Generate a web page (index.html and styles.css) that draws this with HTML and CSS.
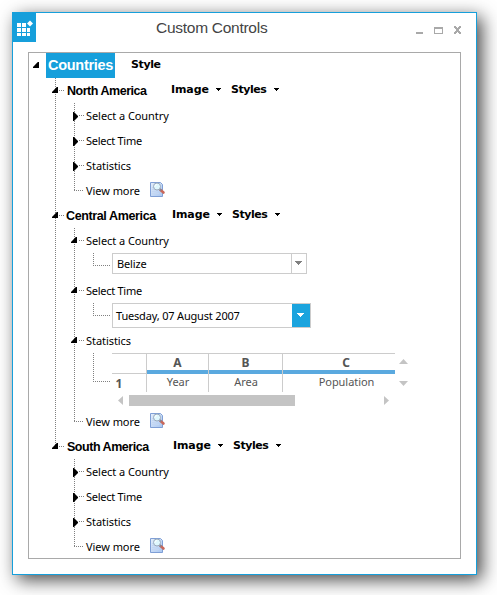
FILE: index.html
```html
<!DOCTYPE html>
<html lang="en">
<head>
<meta charset="utf-8">
<title>Custom Controls</title>
<link rel="stylesheet" href="styles.css">
</head>
<body>
<svg class="defs" width="0" height="0">
  <defs>
    <linearGradient id="paper" x1="0" y1="0" x2="1" y2="1"><stop offset="0" stop-color="#e4eefb"/><stop offset="1" stop-color="#a9c6f0"/></linearGradient>
    <symbol id="preview" viewBox="0 0 16 16">
      <path d="M.5 .5H10.5L12.5 2.5V14.500H.5Z" fill="url(#paper)" stroke="#7f9fd6"/>
      <path d="M2 5.500H4M2 7.500H4M2 9.500H6M2 11.500H9" stroke="#c3d6f2"/>
      <path d="M10.500 8L13.500 10.500" stroke="#c9685a" stroke-width="2.600" stroke-linecap="round"/>
      <path d="M9.500 7L11 8.500" stroke="#7f8799" stroke-width="2"/>
      <circle cx="7" cy="4.500" r="3.500" fill="#dff7fd" stroke="#9aa9bb"/>
      <path d="M5 4.500Q5 2.500 7 2.500" fill="none" stroke="#fff"/>
    </symbol>
    <symbol id="down" viewBox="0 0 5 3"><path d="M0 0H5V1H4V2H3V3H2V2H1V1H0Z"/></symbol>
  </defs>
</svg>
<main class="window">
  <header class="titlebar">
    <svg class="app" width="23" height="29" viewBox="0 0 23 29" fill="#fff" shape-rendering="crispEdges">
      <path d="M4 10h4v4H4zM9 10h4v4H9zM4 15h4v4H4zM9 15h4v4H9zM14 15h3v4h-3zM4 20h4v3H4zM9 20h4v3H9zM14 20h3v3h-3z"/>
      <path d="M17 7.500L20 10.500L17 13.500L14 10.500Z" shape-rendering="auto"/>
    </svg>
    <h1><span>Custom Controls</span></h1>
    <svg class="buttons" width="46" height="9" viewBox="0 0 46 9" fill="#a9a9a9" shape-rendering="crispEdges">
      <path d="M0 6h7v2H0z"/>
      <path fill-rule="evenodd" d="M18 1h9v7h-9zM19 3v4h7V3z"/>
      <path d="M38 0h2v1h1v1h1v-1h1v-1h2v2h-1v1h-1v2h1v1h1v2h-2v-1h-1v-1h-1v1h-1v1h-2v-2h1v-1h1v-2h-1v-1h-1z"/>
    </svg>
  </header>
  <section class="tree">
    <div class="root"><i class="open"></i><b class="selected"><span>Countries</span></b><b class="tool style">Style</b></div>
    <ul class="regions">
      <li class="north">
        <div class="row region"><i class="open"></i><b class="name">North America</b><b class="tool">Image</b><svg class="caret"><use href="#down"/></svg><b class="tool styles">Styles</b><svg class="caret"><use href="#down"/></svg></div>
        <ul class="items">
          <li class="row"><i class="shut"></i><span class="country">Select a Country</span></li>
          <li class="row"><i class="shut"></i><span class="time">Select Time</span></li>
          <li class="row"><i class="shut"></i><span class="stats">Statistics</span></li>
          <li class="row leaf"><i></i><span class="more">View more</span><svg class="preview"><use href="#preview"/></svg></li>
        </ul>
      </li>
      <li class="central">
        <div class="row region"><i class="open"></i><b class="name">Central America</b><b class="tool">Image</b><svg class="caret"><use href="#down"/></svg><b class="tool styles">Styles</b><svg class="caret"><use href="#down"/></svg></div>
        <ul class="items">
          <li class="row"><i class="open"></i><span class="country">Select a Country</span></li>
          <li class="editor"><div class="elbow"></div>
            <div class="combo"><span class="belize">Belize</span><div class="drop"><svg width="7" height="4" viewBox="0 0 7 4" fill="#808080" shape-rendering="crispEdges"><path d="M0 0h7v1H6v1H5v1H4v1H3V3H2V2H1V1H0z"/></svg></div></div>
          </li>
          <li class="row"><i class="open"></i><span class="time">Select Time</span></li>
          <li class="editor"><div class="elbow"></div>
            <div class="combo date"><span class="day">Tuesday, 07 August 2007</span><div class="drop"><svg width="7" height="4" viewBox="0 0 7 4" fill="#fff" shape-rendering="crispEdges"><path d="M0 0h7v1H6v1H5v1H4v1H3V3H2V2H1V1H0z"/></svg></div></div>
          </li>
          <li class="row"><i class="open"></i><span class="stats">Statistics</span></li>
          <li class="editor gridrow"><div class="elbow tall"></div>
            <div class="sheet">
              <div class="cells">
                <div class="corner"></div><div class="head">A</div><div class="head">B</div><div class="head">C</div>
                <div class="index">1</div><div class="cell">Year</div><div class="cell">Area</div><div class="cell last">Population</div>
              </div>
              <div class="hscroll">
                <svg width="5" height="9" viewBox="0 0 5 9"><path d="M5 0V9L0 4.500Z"/></svg>
                <div class="thumb"></div>
                <svg width="5" height="9" viewBox="0 0 5 9"><path d="M0 0V9L5 4.500Z"/></svg>
              </div>
            </div>
            <div class="vscroll">
              <svg width="9" height="5" viewBox="0 0 9 5"><path d="M0 5H9L4.500 0Z"/></svg>
              <svg width="9" height="5" viewBox="0 0 9 5"><path d="M0 0H9L4.500 5Z"/></svg>
            </div>
          </li>
          <li class="row leaf"><i></i><span class="more">View more</span><svg class="preview"><use href="#preview"/></svg></li>
        </ul>
      </li>
      <li class="south">
        <div class="row region"><i class="open"></i><b class="name">South America</b><b class="tool">Image</b><svg class="caret"><use href="#down"/></svg><b class="tool styles">Styles</b><svg class="caret"><use href="#down"/></svg></div>
        <ul class="items">
          <li class="row"><i class="shut"></i><span class="country">Select a Country</span></li>
          <li class="row"><i class="shut"></i><span class="time">Select Time</span></li>
          <li class="row"><i class="shut"></i><span class="stats">Statistics</span></li>
          <li class="row leaf"><i></i><span class="more">View more</span><svg class="preview"><use href="#preview"/></svg></li>
        </ul>
      </li>
    </ul>
  </section>
</main>
</body>
</html>
```
FILE: styles.css
```css
* { box-sizing: border-box; }
html, body { height: 100%; }
body {
  margin: 0;
  padding: 12px;
  overflow: hidden;
  background: #fff;
  color: #000;
  font: 11px/16px "Noto Sans", sans-serif;
  --dots: repeating-linear-gradient(to bottom, #808080 0 1px, transparent 1px 2px);
  --dashes: repeating-linear-gradient(to right, #808080 0 1px, transparent 1px 2px);
}
ul { margin: 0; padding: 0; list-style: none; }
svg { display: block; flex: none; }
.defs { position: absolute; }
span, b { white-space: nowrap; }

.window {
  width: 465px;
  height: 563px;
  border: 1px solid #169fdb;
  background: #fff;
  box-shadow: 5px 5px 17px rgba(0, 0, 0, .72);
}
.titlebar { display: flex; height: 39px; }
.app { background: #169fdb; }
h1 {
  flex: 1;
  margin: 0;
  padding: 6px 0 0 120px;
  color: #444;
  font: 15.5px/18px "Liberation Sans", sans-serif;
  letter-spacing: -.27px;
}
.buttons { margin: 13px 14px 0 0; }

.tree {
  width: 433px;
  height: 507px;
  margin-left: 15px;
  border: 1px solid #a9a9a9;
}
.root { display: flex; height: 25px; padding-left: 4px; }
.selected {
  width: 69px;
  height: 25px;
  margin-left: 7px;
  padding: 4px 0 0 2px;
  background: #169fdb;
  color: #fff;
  font: bold 14.5px/17px "Liberation Sans", sans-serif;
  letter-spacing: -.28px;
}
.tool {
  padding-top: 3px;
  font: bold 11px/16px "DejaVu Sans", sans-serif;
  letter-spacing: -.1px;
}
.tool.style { margin-left: 16px; padding-top: 4px; letter-spacing: -.4px; }

.open {
  flex: none;
  width: 6px;
  height: 6px;
  margin-top: 9px;
  background: #000;
  clip-path: polygon(80% 0, 100% 0, 100% 100%, 0 100%, 0 85%);
}
.shut {
  flex: none;
  width: 5px;
  height: 9px;
  margin-top: 9px;
  background: #000;
  clip-path: polygon(0 0, 20% 0, 100% 45%, 100% 55%, 20% 100%, 0 100%);
}

.regions { background: var(--dots) 26px 0 / 1px 369px no-repeat; }
.row { display: flex; height: 25px; }
.region { padding-left: 23px; background: var(--dashes) 30px 12px / 5px 1px no-repeat; }
.name {
  width: 104px;
  margin-left: 9px;
  padding-top: 5px;
  font: bold 12.5px/17px "Liberation Sans", sans-serif;
  letter-spacing: -.47px;
}
.region .tool { width: 45px; padding-top: 4px; }
.region .tool.styles { width: 43px; margin-left: 10px; letter-spacing: -.45px; }
.caret { width: 5px; height: 3px; margin-top: 10px; shape-rendering: crispEdges; }
.central .name { width: 106px; margin-left: 8px; letter-spacing: -.37px; }
.south .name { width: 106px; }

.items { background: var(--dots) 45px 0 / 1px 88px no-repeat; }
.central .items { background-size: 1px 194px; }
.items .row { padding-left: 42px; background: var(--dashes) 50px 12px / 5px 1px no-repeat; }
.items .row.leaf { background-position: 45px 12px; background-size: 10px 1px; }
.items .row span { width: 64px; margin-left: 9px; padding-top: 5px; letter-spacing: -.06px; }
.items .row .time { letter-spacing: -.27px; }
.items .row .shut { margin-left: 2px; }
.items .row .shut + span { margin-left: 8px; }
.items .row.leaf i { width: 6px; }
.preview { width: 16px; height: 16px; margin-top: 4px; }

.editor { display: flex; height: 25px; padding-left: 64px; }
.elbow {
  width: 19px;
  height: 13px;
  background: var(--dots) 0 0 / 1px 13px no-repeat, var(--dashes) 0 12px / 18px 1px no-repeat;
}
.elbow.tall {
  height: 30px;
  background: var(--dots) 0 0 / 1px 29px no-repeat, var(--dashes) 0 28px / 18px 1px no-repeat;
}
.combo {
  display: flex;
  justify-content: space-between;
  width: 195px;
  height: 21px;
  border: 1px solid #ccc;
  padding-left: 4px;
  line-height: 20px;
  letter-spacing: -.15px;
}
.drop {
  display: flex;
  width: 15px;
  padding: 7px 0 0 3px;
  border-left: 1px solid #ccc;
}
.date { width: 199px; height: 25px; padding-left: 3px; line-height: 23px; letter-spacing: -.18px; }
.date .drop { width: 18px; padding: 9px 0 0 5px; border: 0; background: #1ba4de; }

.gridrow { height: 56px; }
.sheet { width: 283px; }
.cells {
  display: grid;
  grid-template-columns: 34px 62px 74px 113px;
  grid-template-rows: 20px 18px;
  border-top: 1px solid #ccc;
  color: #555;
  text-align: center;
}
.head {
  border-left: 1px solid #ccc;
  background: linear-gradient(#5aa9df, #5aa9df) 0 100% / 100% 4px no-repeat;
  font: bold 12px/18px "Noto Sans", sans-serif;
}
.head:last-of-type, .head:nth-child(4) { padding-left: 14px; }
.corner { border-bottom: 1px solid #ccc; }
.index { padding-right: 20px; font: bold 12px/20px "Noto Sans", sans-serif; }
.cell { border-left: 1px solid #ccc; line-height: 16px; padding-left: 1px; letter-spacing: -.05px; }
.cell.last { padding-left: 15px; }
.hscroll { display: flex; height: 11px; margin-top: 3px; padding-left: 6px; align-items: center; fill: #c4c4c4; }
.thumb { width: 166px; height: 11px; margin: 0 89px 0 6px; background: #c4c4c4; }
.vscroll { padding: 6px 0 0 4px; fill: #c4c4c4; }
.vscroll svg + svg { margin-top: 17px; }
```
